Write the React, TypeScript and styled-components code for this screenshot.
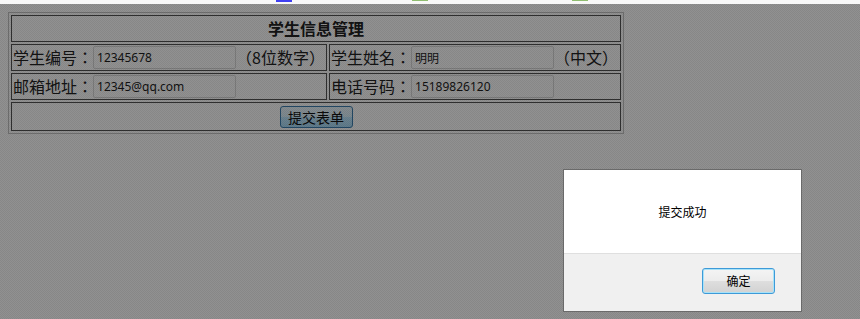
import React from "react";
import styled, { createGlobalStyle } from "styled-components";

const GlobalStyle = createGlobalStyle`
  html, body { margin: 0; padding: 0; }
  body {
    font-family: "Noto Sans CJK SC", "Noto Sans", sans-serif;
    background: #ffffff;
    overflow: hidden;
  }
`;

const Strip = styled.div`
  display: flex;
  align-items: flex-start;
  height: 4px;
  background: #f8f8f8;
`;

const Mark = styled.span<{ $color: string; $gap: number; $h: number }>`
  display: block;
  width: 16px;
  height: ${(p) => p.$h}px;
  margin-left: ${(p) => p.$gap}px;
  background: ${(p) => p.$color};
`;

const Stage = styled.div`
  position: relative;
  box-sizing: border-box;
  height: calc(100vh - 4px);
  padding: 8px;
  background: #ffffff;
`;

const FormTable = styled.table`
  border-collapse: separate;
  border-spacing: 2px;
  border: 1px solid #c4c4c4;
  width: 616px;
  color: #222;
`;

const Cell = styled.td<{ $w?: number }>`
  box-sizing: border-box;
  border: 1px solid #545454;
  padding: 1px;
  ${(p) => (p.$w ? `width: ${p.$w}px;` : "")}
  font-size: 16px;
  line-height: 23px;
  vertical-align: middle;
`;

const TitleCell = styled(Cell)`
  text-align: center;
  font-weight: bold;
  line-height: 23px;
`;

const Field = styled.div`
  display: flex;
  align-items: center;
  height: 23px;
  white-space: nowrap;
`;

const Label = styled.span`
  font-family: "Noto Sans CJK TC", "Noto Sans CJK SC", sans-serif;
  font-size: 16px;
  text-spacing-trim: space-all;
`;

const Hint = styled.span`
  font-family: "Noto Sans CJK TC", "Noto Sans CJK SC", sans-serif;
  font-size: 16px;
  text-spacing-trim: space-all;
  font-feature-settings: "halt" 0, "chws" 0, "palt" 0;
`;

const TextInput = styled.input`
  box-sizing: border-box;
  width: 143px;
  height: 23px;
  margin: 0;
  padding: 0 3px;
  border: 1px solid #dadada;
  border-radius: 2px;
  background: #ffffff;
  font-family: "Noto Sans", "Noto Sans CJK SC", sans-serif;
  font-size: 12px;
  color: #1e1e1e;
  outline: none;
`;

const SubmitButton = styled.button`
  display: block;
  box-sizing: border-box;
  width: 73px;
  height: 22px;
  margin: 2px auto 1px;
  padding: 0;
  border: 1px solid #3c7fb1;
  border-radius: 3px;
  background: linear-gradient(#eaf6fd 0%, #d9f0fc 50%, #bee6fd 51%, #a7d9f5 100%);
  font-family: "Noto Sans CJK SC", sans-serif;
  font-size: 14px;
  line-height: 20px;
  color: #111;
`;

const Overlay = styled.div`
  position: absolute;
  inset: 0;
  background: repeating-conic-gradient(
      rgba(0, 0, 0, 0.43) 0 25%,
      rgba(0, 0, 0, 0.47) 0 50%
    )
    0 0 / 2px 2px;
`;

const Dialog = styled.div`
  position: absolute;
  left: 563px;
  top: 165px;
  width: 239px;
  box-sizing: border-box;
  border: 1px solid #6a6a6a;
  background: #ffffff;
  display: flex;
  flex-direction: column;
`;

const DialogBody = styled.div`
  height: 83px;
  display: flex;
  align-items: center;
  justify-content: center;
  font-size: 12px;
  color: #000;
`;

const DialogFooter = styled.div`
  height: 58px;
  border-top: 1px solid #dfdfdf;
  background: #f0f0f0;
  display: flex;
  justify-content: flex-end;
  align-items: flex-start;
  padding: 14px 26px 0 0;
  box-sizing: border-box;
`;

const OkButton = styled.button`
  box-sizing: border-box;
  width: 73px;
  height: 26px;
  margin: 0;
  padding: 0;
  border: 1px solid #3d9ad8;
  border-radius: 3px;
  box-shadow: inset 0 0 0 1px #a8e2f8;
  background: linear-gradient(#f4f4f4 0%, #ececec 50%, #dedede 51%, #d2d2d2 100%);
  font-family: "Noto Sans CJK SC", sans-serif;
  font-size: 12px;
  line-height: 24px;
  color: #000;
`;

export default function App() {
  return (
    <>
      <GlobalStyle />
      <Strip>
        <Mark $color="#3f3ff2" $gap={276} $h={2} />
        <Mark $color="#8fbd70" $gap={120} $h={1} />
        <Mark $color="#8fbd70" $gap={144} $h={1} />
      </Strip>
      <Stage>
        <FormTable>
          <tbody>
            <tr>
              <TitleCell colSpan={2}>学生信息管理</TitleCell>
            </tr>
            <tr>
              <Cell $w={316}>
                <Field>
                  <Label>学生编号：</Label>
                  <TextInput defaultValue="12345678" />
                  <Hint>（8位数字）</Hint>
                </Field>
              </Cell>
              <Cell $w={292}>
                <Field>
                  <Label>学生姓名：</Label>
                  <TextInput defaultValue="明明" />
                  <Hint>（中文）</Hint>
                </Field>
              </Cell>
            </tr>
            <tr>
              <Cell $w={316}>
                <Field>
                  <Label>邮箱地址：</Label>
                  <TextInput defaultValue="12345@qq.com" />
                </Field>
              </Cell>
              <Cell $w={292}>
                <Field>
                  <Label>电话号码：</Label>
                  <TextInput defaultValue="15189826120" />
                </Field>
              </Cell>
            </tr>
            <tr>
              <Cell colSpan={2}>
                <SubmitButton type="button">提交表单</SubmitButton>
              </Cell>
            </tr>
          </tbody>
        </FormTable>
        <Overlay />
        <Dialog>
          <DialogBody>提交成功</DialogBody>
          <DialogFooter>
            <OkButton type="button">确定</OkButton>
          </DialogFooter>
        </Dialog>
      </Stage>
    </>
  );
}
